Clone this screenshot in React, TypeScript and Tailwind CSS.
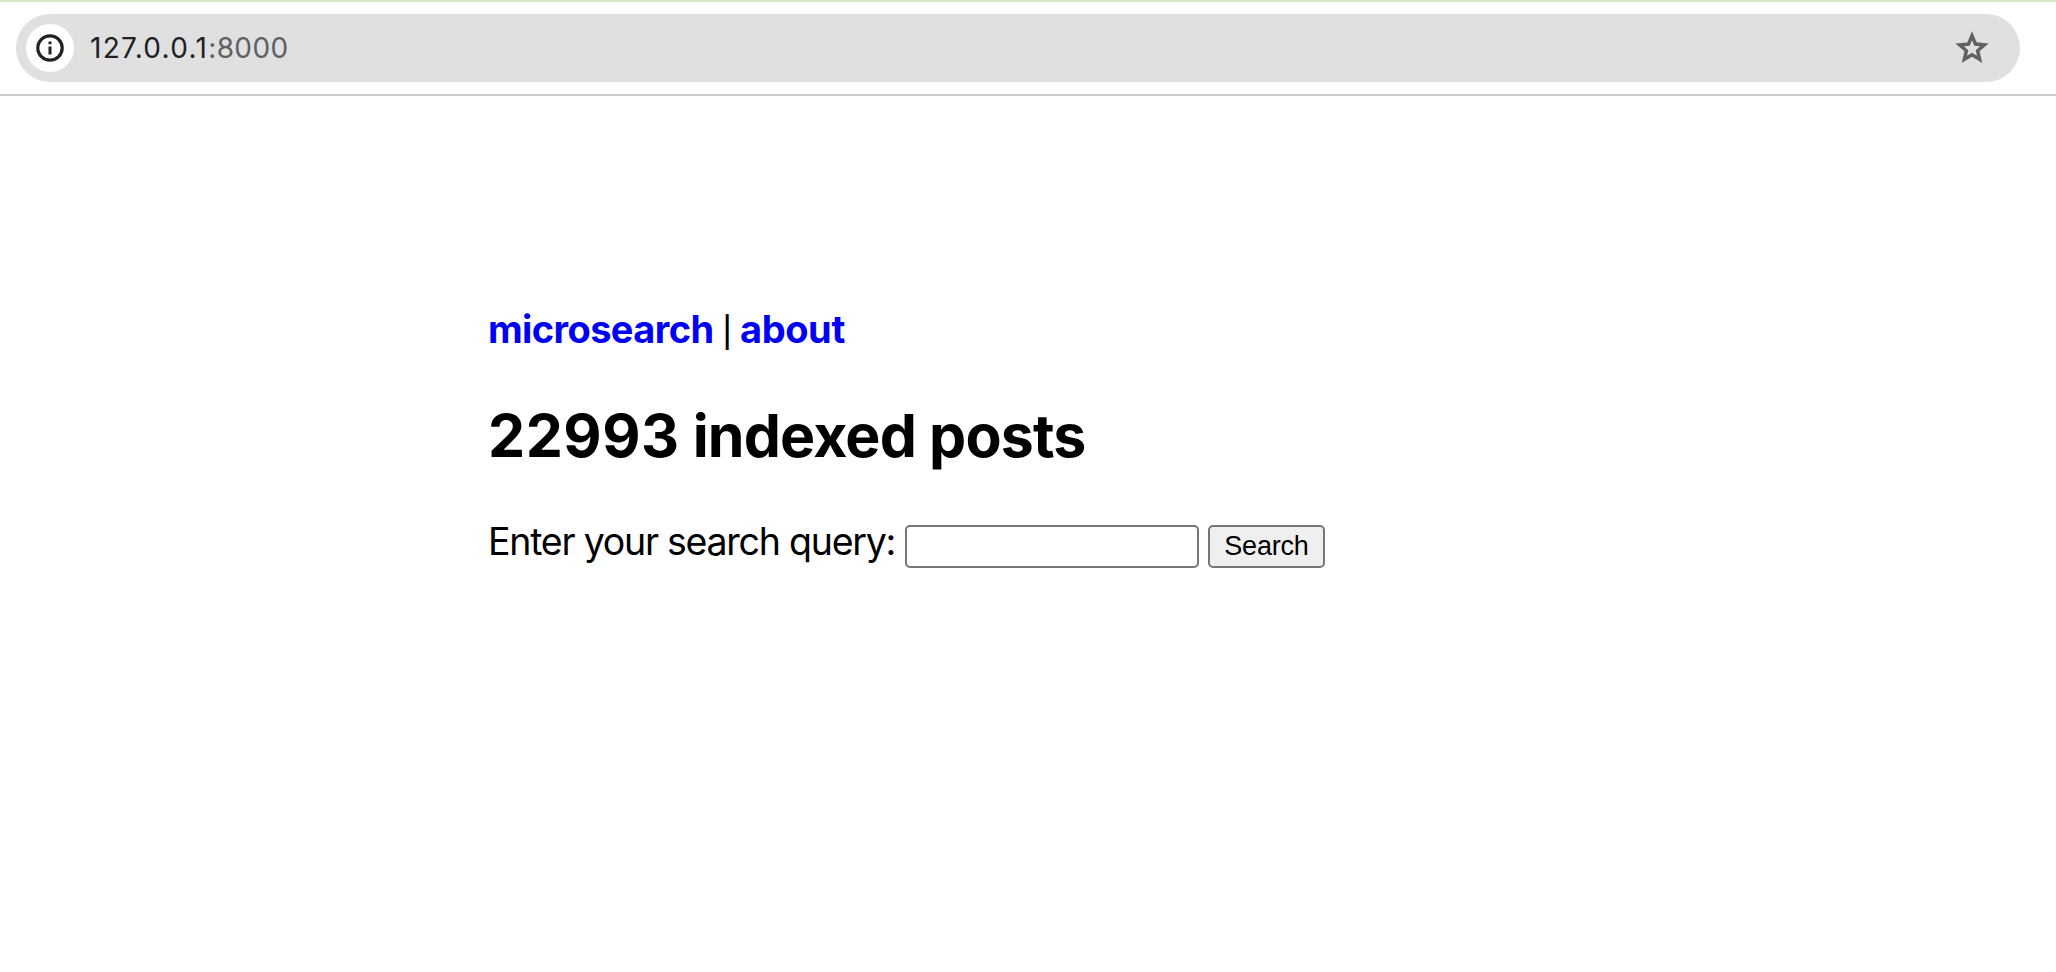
export default function App() {
  return (
    <div className="flex h-[972px] w-full flex-col overflow-hidden border-t-2 border-[#d3eac2] bg-white font-['Inter',sans-serif] text-black">
      <header className="flex h-[94px] shrink-0 items-start border-b-2 border-[#cbcbcb] pt-3 pr-9 pl-4">
        <div className="flex h-[68px] w-full items-center rounded-full bg-[#e0e0e0] pr-7 pl-2.5">
          <button className="flex size-12 items-center justify-center rounded-full bg-white" aria-label="Site information">
            <svg width="28" height="28" viewBox="0 0 28 28" fill="none">
              <circle cx="14" cy="14" r="12.2" stroke="#202124" strokeWidth="3.2" />
              <path d="M12.5 12.4h3v8h-3zM12.5 7.4h3v2.8h-3z" fill="#202124" />
            </svg>
          </button>
          <div className="ml-4 flex grow text-[28px] leading-8 text-[#5f6063]">
            <span className="tracking-[1.3px] text-[#202124]">127.0.0.1</span>
            <span className="tracking-[0.4px]">:8000</span>
          </div>
          <button aria-label="Bookmark">
            <svg className="block" width="40" height="40" viewBox="0 0 24 24" fill="#5f6264">
              <path fillRule="evenodd" d="M22 9.24l-7.19-.62L12 2 9.19 8.63 2 9.24l5.46 4.73L5.82 21 12 17.27 18.18 21l-1.63-7.03L22 9.24zM12 14.9l-3 1.8.8-3.4-2.65-2.3 3.48-.3L12 7.4l1.37 3.3 3.48.3-2.65 2.3.8 3.4z" />
            </svg>
          </button>
        </div>
      </header>
      <main className="flex flex-col pt-[207px] pl-[488px]">
        <nav className="flex h-[52px] items-center text-[38px] leading-[52px]">
          <a className="w-[234px] whitespace-nowrap font-bold tracking-[-0.6px] text-[#0000f5]">microsearch</a>
          <span className="mt-1.5 w-[18px] text-[30px] leading-[52px] font-medium">|</span>
          <a className="whitespace-nowrap font-bold tracking-[-0.4px] text-[#0000f5]">about</a>
        </nav>
        <h1 className="mt-[43px] h-[76px] whitespace-nowrap text-[59px] leading-[76px] font-bold tracking-[-0.85px]">
          <span className="tracking-[0.5px]">22993</span> indexed posts
        </h1>
        <form className="mt-[42px] flex h-[52px] items-center">
          <label className="w-[417px] whitespace-nowrap text-[37.5px] leading-[52px] tracking-[-1.25px]">Enter your search query:</label>
          <input className="mt-2 h-[43px] w-[294px] rounded-[5px] border-2 border-[#767676] bg-white" />
          <button type="button" className="mt-2 ml-[9px] h-[43px] w-[117px] rounded-[5px] border-2 border-[#767676] bg-[#efefef] font-['Liberation_Sans',sans-serif] text-[27px] leading-8 tracking-[-0.2px]">Search</button>
        </form>
      </main>
    </div>
  );
}
